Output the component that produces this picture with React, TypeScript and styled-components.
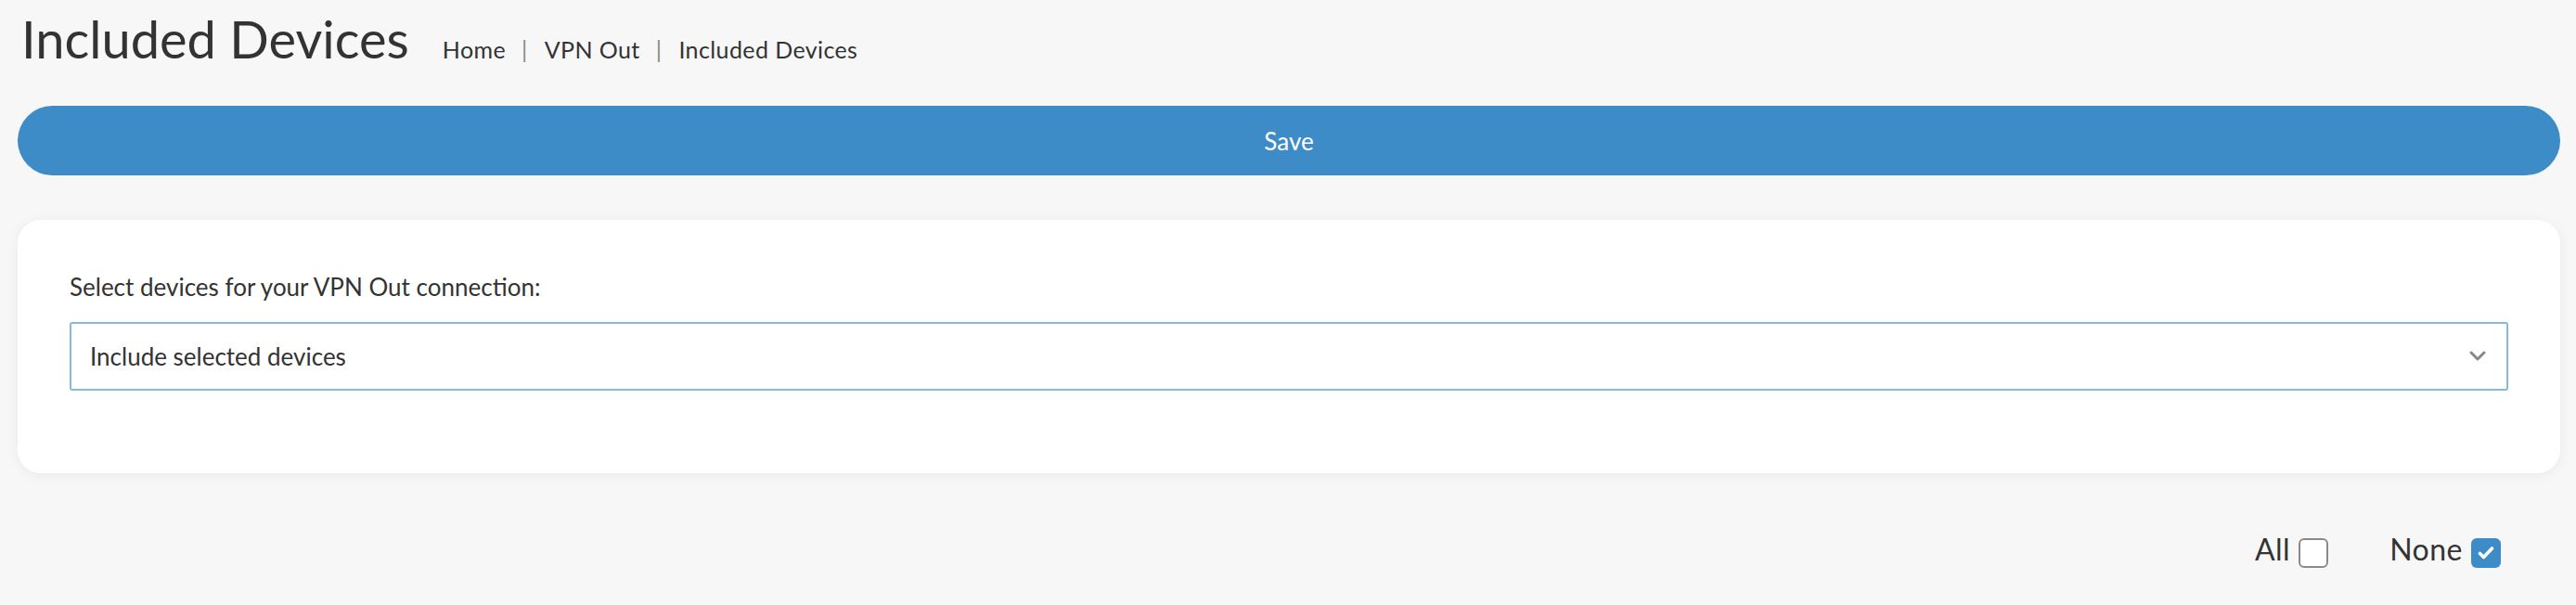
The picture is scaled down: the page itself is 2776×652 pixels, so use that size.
import * as React from 'react';
import styled, {createGlobalStyle} from 'styled-components';

const GlobalStyle = createGlobalStyle`
    html, body {
        margin: 0;
        padding: 0;
        background: #f7f7f7;
    }

    body {
        font-family: Lato, 'Open Sans', sans-serif;
        color: #333;
    }
`;

const Page = styled.div`
    display: flex;
    flex-direction: column;
    padding: 8px 17px 0 19px;
`;

const Header = styled.div`
    display: flex;
    align-items: baseline;
    gap: 36px;
    padding-left: 4px;
`;

const Title = styled.h1`
    margin: 0;
    font-size: 56px;
    font-weight: 400;
    line-height: 1.2;
    color: #333;
`;

const Breadcrumbs = styled.nav`
    display: flex;
    align-items: baseline;
    font-size: 25px;
    letter-spacing: 0.4px;
    color: #333;
`;

const Crumb = styled.span``;

const Separator = styled.span`
    margin: 0 18px 0 17px;
    color: #8a8a8a;
`;

const SaveButton = styled.button`
    margin-top: 39px;
    height: 75px;
    border: none;
    border-radius: 38px;
    background: #3d8cc8;
    color: #fff;
    font-family: inherit;
    font-size: 26px;
    cursor: pointer;
`;

const Card = styled.section`
    margin-top: 48px;
    padding: 57px 56px 89px 56px;
    background: #fff;
    border-radius: 25px;
    box-shadow: 0 2px 14px rgba(0, 0, 0, 0.06);
`;

const Label = styled.div`
    font-size: 26px;
    line-height: 1.2;
    color: #333;
`;

const SelectBox = styled.div`
    margin-top: 22px;
    height: 74px;
    box-sizing: border-box;
    display: flex;
    align-items: center;
    justify-content: space-between;
    padding: 0 22px 0 20px;
    border: 2px solid #88b9dd;
    border-radius: 3px;
    font-size: 26px;
    color: #333;
`;

const Toggles = styled.div`
    margin-top: 63px;
    display: flex;
    justify-content: flex-end;
    align-items: center;
    gap: 66px;
    padding-right: 64px;
`;

const Toggle = styled.label`
    display: flex;
    align-items: center;
    gap: 9px;
    font-size: 32px;
    line-height: 1.2;
    letter-spacing: 0.5px;
    color: #333;
`;

const Box = styled.span<{$checked: boolean}>`
    display: flex;
    align-items: center;
    justify-content: center;
    box-sizing: border-box;
    width: 32px;
    height: 32px;
    margin-top: 6px;
    border-radius: 6px;
    border: ${({$checked}) => ($checked ? 'none' : '2px solid #8a8a8a')};
    background: ${({$checked}) => ($checked ? '#3d8cc8' : '#fff')};
`;

const Chevron = () => (
    <svg width="18" height="12" viewBox="0 0 18 12">
        <path d="M2 2l7 7 7-7" fill="none" stroke="#888" strokeWidth="3" strokeLinecap="round" strokeLinejoin="round" />
    </svg>
);

const Check = () => (
    <svg width="18" height="16" viewBox="0 0 18 16">
        <path d="M2.5 8.5l4 4 9-9.5" fill="none" stroke="#fff" strokeWidth="3.6" strokeLinecap="round" strokeLinejoin="round" />
    </svg>
);

const App: React.FC = () => {
    return (
        <>
            <GlobalStyle />
            <Page>
                <Header>
                    <Title>Included Devices</Title>
                    <Breadcrumbs>
                        <Crumb>Home</Crumb>
                        <Separator>|</Separator>
                        <Crumb>VPN Out</Crumb>
                        <Separator>|</Separator>
                        <Crumb>Included Devices</Crumb>
                    </Breadcrumbs>
                </Header>
                <SaveButton>Save</SaveButton>
                <Card>
                    <Label>Select devices for your VPN Out connection:</Label>
                    <SelectBox>
                        <span>Include selected devices</span>
                        <Chevron />
                    </SelectBox>
                </Card>
                <Toggles>
                    <Toggle>
                        All
                        <Box $checked={false} />
                    </Toggle>
                    <Toggle>
                        None
                        <Box $checked>
                            <Check />
                        </Box>
                    </Toggle>
                </Toggles>
            </Page>
        </>
    );
};

export default App;
